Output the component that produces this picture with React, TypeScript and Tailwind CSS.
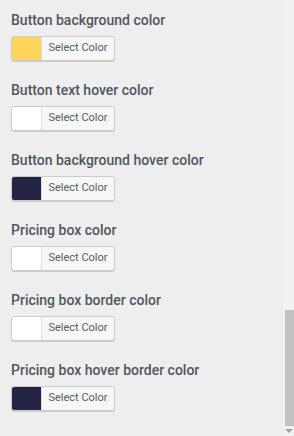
import React from "react";

const items: { label: string; color: string }[] = [
  { label: "Button background color", color: "#ffd55b" },
  { label: "Button text hover color", color: "#ffffff" },
  { label: "Button background hover color", color: "#232444" },
  { label: "Pricing box color", color: "#ffffff" },
  { label: "Pricing box border color", color: "#ffffff" },
  { label: "Pricing box hover border color", color: "#232444" },
];

export default function App() {
  return (
    <div className="flex h-[436px] w-[294px] overflow-hidden bg-[#eeeeee]" style={{ fontFamily: "Roboto, 'Noto Sans', sans-serif" }}>
      <div className="flex flex-1 flex-col pl-[11px] pt-[10px]">
        {items.map((it) => (
          <div key={it.label} className="h-[70px]">
            <div className="h-[20px] whitespace-nowrap text-[14px] font-medium leading-[20px] text-[#50575e]">{it.label}</div>
            <div className="mt-[6px] flex h-[25px] w-[104px] overflow-hidden rounded-[3px] border border-[#cccccc] bg-[#f7f7f7] shadow-[0_1px_0_#cccccc]">
              <div className="w-[30px] border-r border-[#dddddd]" style={{ backgroundColor: it.color }} />
              <div className="flex flex-1 items-center justify-center text-[11px] text-[#555d66]">Select Color</div>
            </div>
          </div>
        ))}
      </div>
      <div className="flex w-[11px] flex-col bg-[#f1f1f1]">
        <div className="flex-1" />
        <div className="ml-[2px] h-[116px] bg-[#c1c1c1]" />
        <div className="flex h-[10px] items-center justify-center">
          <div className="h-0 w-0 border-l-[4px] border-r-[4px] border-t-[4px] border-l-transparent border-r-transparent border-t-[#a3a3a3]" />
        </div>
      </div>
    </div>
  );
}
